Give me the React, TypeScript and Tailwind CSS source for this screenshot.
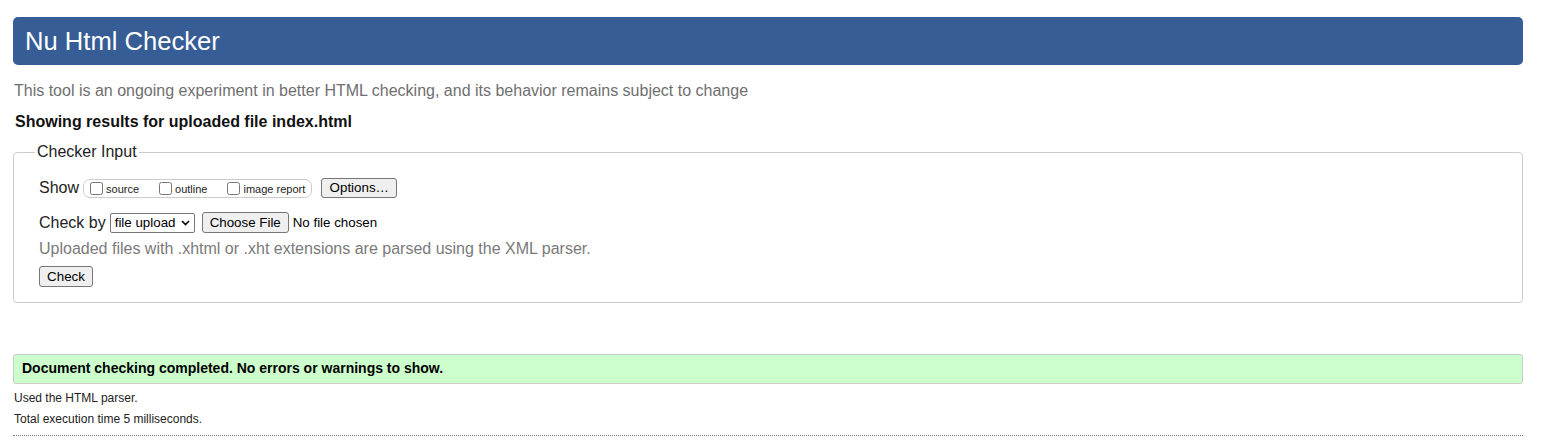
export default function App() {
  const btn =
    "whitespace-nowrap rounded-[3px] border border-[#767676] bg-[#efefef] px-[5px] text-[13.33px] leading-none text-black";

  return (
    <div className="min-h-screen bg-white font-['Liberation_Sans',Arial,sans-serif] text-[#222]">
      <div className="ml-[13px] w-[1510px] pt-[17px]">
        <h1 className="flex h-[48px] items-center rounded-[5px] bg-[#365d95] pl-[12px] text-[25.6px] font-normal text-white">
          Nu Html Checker
        </h1>

        <p className="mt-[16px] pl-[1px] text-[16px] leading-[20px] text-[#6f6f6f]">
          This tool is an ongoing experiment in better HTML checking, and its behavior remains
          subject to change
        </p>

        <p className="mt-[11px] pl-[2px] text-[16px] font-bold leading-[20px] text-[#111]">
          Showing results for uploaded file index.html
        </p>

        <fieldset className="mt-[11px] rounded-[4px] border border-[#cccccc] pb-[14px]">
          <legend className="ml-[21px] px-[2px] text-[16px] leading-[18px] text-[#222]">
            Checker Input
          </legend>

          <div className="pl-[25px]">
            <div className="mt-[17px] flex h-[20px] items-center">
              <span className="text-[16px]">Show</span>
              <div className="ml-[4px] flex h-[19px] items-center gap-[20px] rounded-[7px] border border-[#cccccc] pl-[6px] pr-[6px] text-[11px]">
                <label className="flex items-center gap-[3px]">
                  <input type="checkbox" className="m-0 h-[13px] w-[13px]" />
                  <span className="mt-[2px]">source</span>
                </label>
                <label className="flex items-center gap-[3px]">
                  <input type="checkbox" className="m-0 h-[13px] w-[13px]" />
                  <span className="mt-[2px]">outline</span>
                </label>
                <label className="flex items-center gap-[3px]">
                  <input type="checkbox" className="m-0 h-[13px] w-[13px]" />
                  <span className="mt-[2px]">image report</span>
                </label>
              </div>
              <button type="button" className={`${btn} ml-[9px] h-[20px] w-[76px]`}>
                Options…
              </button>
            </div>

            <div className="mt-[14px] flex h-[21px] items-center">
              <span className="text-[16px]">Check by</span>
              <div className="ml-[4px] flex h-[20px] w-[85px] items-center justify-between rounded-[2px] border border-[#767676] bg-white pl-[4px] pr-[4px] text-[13.33px] text-black">
                <span>file upload</span>
                <svg width="9" height="6" viewBox="0 0 9 6" className="mt-[1px]">
                  <path d="M1 1l3.5 3.5L8 1" fill="none" stroke="#000" strokeWidth="1.6" />
                </svg>
              </div>
              <button type="button" className={`${btn} ml-[7px] h-[21px] w-[87px]`}>
                Choose File
              </button>
              <span className="ml-[4px] text-[13.33px] text-black">No file chosen</span>
            </div>

            <p className="mt-[6px] text-[16px] leading-[20px] text-[#7a7a7a]">
              Uploaded files with .xhtml or .xht extensions are parsed using the XML parser.
            </p>

            <button type="button" className={`${btn} mt-[7px] h-[21px] w-[54px]`}>
              Check
            </button>
          </div>
        </fieldset>

        <div className="mt-[51px] flex h-[30px] items-center rounded-[3px] border border-[#cccccc] bg-[#ccffcc] pl-[8px] text-[14px] font-bold text-black">
          Document checking completed. No errors or warnings to show.
        </div>

        <p className="mt-[6px] pl-[1px] text-[12px] leading-[16px] text-[#222]">
          Used the HTML parser.
        </p>
        <p className="mt-[5px] pl-[1px] text-[12px] leading-[16px] text-[#222]">
          Total execution time 5 milliseconds.
        </p>
        <div className="mt-[8px] border-t border-dotted border-[#777]" />
      </div>
    </div>
  );
}
